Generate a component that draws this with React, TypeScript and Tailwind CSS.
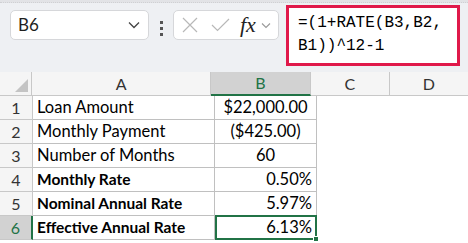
import React from 'react';

const rows = [
  { n: 1, a: 'Loan Amount', b: '$22,000.00', align: 'center', bold: false },
  { n: 2, a: 'Monthly Payment', b: '($425.00)', align: 'center', bold: false },
  { n: 3, a: 'Number of Months', b: '60', align: 'center', bold: false },
  { n: 4, a: 'Monthly Rate', b: '0.50%', align: 'right', bold: true },
  { n: 5, a: 'Nominal Annual Rate', b: '5.97%', align: 'right', bold: true },
  { n: 6, a: 'Effective Annual Rate', b: '6.13%', align: 'right', bold: true },
];

function Toolbar() {
  return (
    <div className="relative h-[72px] bg-[#eef0f3]">
      <div className="h-[3px] bg-[#e2e3e6] border-b border-dotted border-[#cfd0d3]" />
      <div className="flex items-start">
        {/* Name box */}
        <div className="mt-[7px] ml-[10px] flex h-[30px] w-[139px] items-center justify-between rounded-[5px] border border-[#d6d7da] bg-white pl-[7px] pr-[8px]">
          <span className="text-[17px] text-[#1f1f1f]">B6</span>
          <svg width="12" height="8" viewBox="0 0 12 8" fill="none" stroke="#444" strokeWidth="1.3">
            <path d="M1 1.5 L6 6.5 L11 1.5" />
          </svg>
        </div>
        {/* Dots */}
        <div className="mt-[18px] ml-[11px] flex flex-col gap-[3px]">
          <div className="h-[3px] w-[3px] bg-[#555]" />
          <div className="h-[3px] w-[3px] bg-[#555]" />
          <div className="h-[3px] w-[3px] bg-[#555]" />
        </div>
        {/* Cancel / Enter / fx */}
        <div className="mt-[7px] ml-[10px] flex h-[30px] w-[106px] items-center rounded-[5px] border border-[#d6d7da] bg-white pl-[8px]">
          <svg width="16" height="16" viewBox="0 0 16 16" fill="none" stroke="#b8b8b8" strokeWidth="1.2">
            <path d="M1 1 L15 15 M15 1 L1 15" />
          </svg>
          <svg className="ml-[13px]" width="19" height="14" viewBox="0 0 19 14" fill="none" stroke="#b8b8b8" strokeWidth="1.2">
            <path d="M1 7 L6.5 12.5 L18 1" />
          </svg>
          <span className="ml-[10px] font-['Liberation_Serif'] text-[22px] italic leading-none text-[#222]">fx</span>
          <svg className="ml-[5px]" width="10" height="7" viewBox="0 0 10 7" fill="none" stroke="#999" strokeWidth="1.1">
            <path d="M1 1.5 L5 5.5 L9 1.5" />
          </svg>
        </div>
        {/* Formula */}
        <div className="mt-[2px] ml-[7px] h-[61px] w-[174px] border-[3px] border-[#e0194a] bg-white pl-[9px] pt-[4px] font-['Liberation_Mono'] text-[16px] leading-[23px] text-black">
          <div>=(1+RATE(B3,B2,</div>
          <div>B1))^12-1</div>
        </div>
      </div>
    </div>
  );
}

function Grid() {
  return (
    <div>
      {/* column headers */}
      <div className="flex h-[24px] bg-[#f5f5f5] text-[16px] text-[#333]">
        <div className="relative w-[33px] border-r border-b border-[#c8c8c8]">
          <svg className="absolute right-[3px] bottom-[3px]" width="13" height="13" viewBox="0 0 13 13">
            <path d="M13 0 L13 13 L0 13 Z" fill="#c4c4c4" />
          </svg>
        </div>
        <div className="flex w-[182px] items-center justify-center border-r border-b border-[#c8c8c8]">A</div>
        <div className="flex w-[102px] items-center justify-center border-r border-[#c8c8c8] border-b-2 border-b-[#217346] bg-[#d2d2d2] text-[#217346]">B</div>
        <div className="flex w-[80px] items-center justify-center border-r border-b border-[#c8c8c8]">C</div>
        <div className="flex w-[80px] items-center justify-center border-b border-[#c8c8c8]">D</div>
      </div>
      {rows.map((r) => (
        <div key={r.n} className="flex h-[24px] text-[16.5px] text-black">
          <div
            className={
              r.n === 6
                ? 'flex w-[33px] items-center justify-center border-r-2 border-r-[#217346] border-b border-b-[#c8c8c8] bg-[#d2d2d2] text-[16px] text-[#217346]'
                : 'flex w-[33px] items-center justify-center border-r border-b border-[#c8c8c8] bg-[#f5f5f5] text-[16px] text-[#333]'
            }
          >
            {r.n}
          </div>
          <div className={`flex w-[182px] items-center border-r border-b border-[#c0c0c0] pl-[4px] ${r.bold ? 'text-[15.5px] font-bold' : ''}`}>
            {r.a}
          </div>
          {r.n === 6 ? (
            <div className="relative -mt-[1px] flex h-[25px] w-[102px] items-center justify-end border-2 border-[#217346] pr-[3px]">
              {r.b}
              <div className="absolute -right-[4px] -bottom-[4px] h-[6px] w-[6px] border border-white bg-[#217346]" />
            </div>
          ) : (
            <div
              className={`flex w-[102px] items-center border-r border-b border-[#c0c0c0] ${
                r.align === 'center' ? 'justify-center' : 'justify-end pr-[4px]'
              }`}
            >
              {r.b}
            </div>
          )}
          <div className="flex-1" />
        </div>
      ))}
    </div>
  );
}

export default function App() {
  return (
    <div className="h-[243px] w-[468px] overflow-hidden bg-white font-['Lato','Open_Sans',sans-serif]">
      <Toolbar />
      <Grid />
    </div>
  );
}
